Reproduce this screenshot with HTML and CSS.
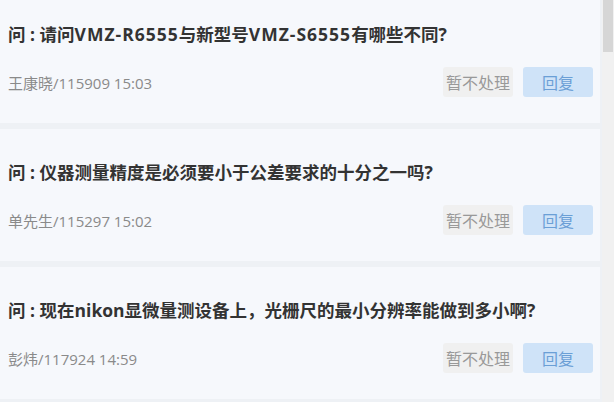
FILE: index.html
```html
<!DOCTYPE html>
<html lang="zh">
<head>
    <meta charset="UTF-8">
    <meta name="viewport" content="width=device-width, initial-scale=1.0">
    <title>问答列表</title>
    <link rel="stylesheet" href="styles.css">
</head>
<body>
    <div class="page">
        <div class="list">
            <div class="card">
                <div class="question">问 : 请问<span class="model">VMZ-R6555</span>与新型号<span class="model">VMZ-S6555</span>有哪些不同?</div>
                <div class="row">
                    <span class="meta">王康晓/115909 15:03</span>
                    <div class="actions">
                        <button class="btn ignore">暂不处理</button>
                        <button class="btn reply">回复</button>
                    </div>
                </div>
            </div>
            <div class="card">
                <div class="question">问 : 仪器测量精度是必须要小于公差要求的十分之一吗?</div>
                <div class="row">
                    <span class="meta">单先生/115297 15:02</span>
                    <div class="actions">
                        <button class="btn ignore">暂不处理</button>
                        <button class="btn reply">回复</button>
                    </div>
                </div>
            </div>
            <div class="card">
                <div class="question">问 : 现在nikon显微量测设备上，光栅尺的最小分辨率能做到多小啊?</div>
                <div class="row">
                    <span class="meta">彭炜/117924 14:59</span>
                    <div class="actions">
                        <button class="btn ignore">暂不处理</button>
                        <button class="btn reply">回复</button>
                    </div>
                </div>
            </div>
        </div>
        <div class="scrollbar">
            <div class="thumb"></div>
        </div>
    </div>
</body>
</html>
```

FILE: styles.css
```css
body {
    margin: 0;
    padding: 0;
    font-family: "Noto Sans CJK SC", "Noto Sans", sans-serif;
    background-color: #eef1f5;
    overflow: hidden;
}

.page {
    display: flex;
    height: 402px;
    overflow: hidden;
}

.list {
    flex: 1;
    display: flex;
    flex-direction: column;
    gap: 6px;
    margin-top: -9px;
}

.card {
    background-color: #f6f8fc;
    padding: 31px 7px 26px 8px;
    flex-shrink: 0;
}

.question {
    font-family: "Open Sans", "Noto Sans CJK SC", sans-serif;
    font-size: 17.5px;
    line-height: 24px;
    font-weight: bold;
    color: #333;
}

.model {
    letter-spacing: 1px;
}

.row {
    display: flex;
    align-items: center;
    justify-content: space-between;
    margin-top: 21px;
}

.meta {
    font-family: "Open Sans", "Noto Sans CJK SC", sans-serif;
    font-size: 15px;
    color: #8a8a8a;
}

.actions {
    display: flex;
    gap: 10px;
}

.btn {
    width: 70px;
    height: 30px;
    border: none;
    border-radius: 3px;
    font-family: inherit;
    font-size: 16px;
    padding: 0;
    cursor: pointer;
}

.ignore {
    background-color: #f0f0f0;
    color: #999;
}

.reply {
    background-color: #cfe3f8;
    color: #6b9fd6;
}

.scrollbar {
    width: 12px;
    margin-left: 2px;
    background-color: #f1f1f1;
}

.thumb {
    height: 52px;
    margin-left: 1px;
    width: 10px;
    background-color: #d6d6d6;
}
```
